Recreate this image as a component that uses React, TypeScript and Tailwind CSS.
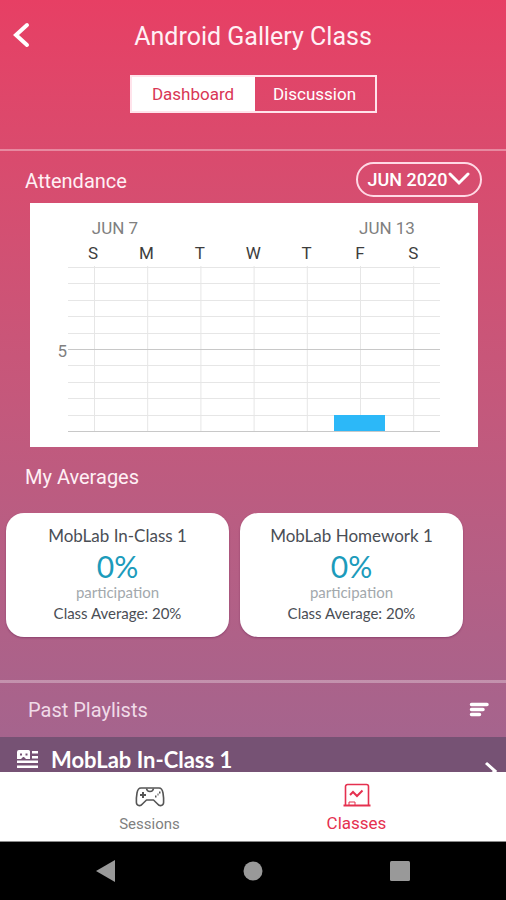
import React from "react";

const days = ["S", "M", "T", "W", "T", "F", "S"];
const lines = Array.from({ length: 11 }, (_, i) => i);

function AttendanceChart() {
  return (
    <svg
      viewBox="0 0 448 244"
      role="img"
      aria-label="Attendance, June 7 to June 13"
      className="block w-full bg-white font-['Roboto',sans-serif]"
    >
      <text x="85" y="31" textAnchor="middle" className="fill-[#808080] text-[17px]">
        JUN 7
      </text>
      <text x="357" y="31" textAnchor="middle" className="fill-[#808080] text-[17px]">
        JUN 13
      </text>
      {days.map((d, i) => (
        <g key={i}>
          <text x={63 + i * 53.4} y="56" textAnchor="middle" className="fill-[#3d3d3d] text-[17px]">
            {d}
          </text>
          <line x1={64.5 + i * 53.2} x2={64.5 + i * 53.2} y1="63" y2="229" stroke="#e6e6e6" />
        </g>
      ))}
      {lines.map((i) => (
        <line
          key={i}
          x1="38"
          x2="410"
          y1={Math.round(64 + i * 16.4) + 0.5}
          y2={Math.round(64 + i * 16.4) + 0.5}
          stroke={i === 5 || i === 10 ? "#c8c8c8" : "#e6e6e6"}
        />
      ))}
      <text x="37" y="154" textAnchor="end" className="fill-[#808080] text-[17px]">
        5
      </text>
      <rect x="304" y="212" width="51" height="16" fill="#2cb8f8" />
    </svg>
  );
}

function AverageCard({ title }: { title: string }) {
  return (
    <article className="flex h-[124px] w-[223px] shrink-0 flex-col items-center rounded-[18px] bg-white pt-3 font-['Lato',sans-serif] text-[#4a4e55] shadow-[0_1px_2px_rgba(90,20,70,0.4)]">
      <h3 className="text-[17px] leading-[22px]">{title}</h3>
      <p className="text-[30px] leading-[38px] text-[#1c9bbb]">0%</p>
      <p className="text-[15px] leading-[14px] text-[#a3a9ad]">participation</p>
      <p className="mt-1 text-[15px] leading-[20px]">Class Average: 20%</p>
    </article>
  );
}

export default function App() {
  return (
    <div className="flex h-screen flex-col overflow-hidden bg-black font-['Roboto',sans-serif]">
      <main className="min-h-0 flex-1 overflow-y-auto bg-linear-to-b from-[#e73f64] to-[#a2658f] text-[#fff0f5] [scrollbar-width:none]">
        <header className="relative flex flex-col items-center border-b-2 border-white/35 pt-[21px] pb-9">
          <button aria-label="Back" className="absolute top-[22px] left-3 text-white">
            <svg width="18" height="26" viewBox="0 0 18 26" fill="none" stroke="currentColor" strokeWidth="4" strokeLinecap="round">
              <path d="M15 3 4 13l11 10" />
            </svg>
          </button>
          <h1 className="text-[25px] leading-8">Android Gallery Class</h1>
          <div className="mt-[22px] flex h-[38px] w-[247px] border-2 border-[#ffe3eb] text-[17px]">
            <button className="flex-1 bg-white pt-0.5 text-[#d93655]">Dashboard</button>
            <button className="w-[120px] pt-0.5 text-white">Discussion</button>
          </div>
        </header>

        <section>
          <div className="flex h-[52px] items-center justify-between pt-1 pr-6 pl-[25px]">
            <h2 className="pt-1 text-[20px]">Attendance</h2>
            <button className="flex h-[35px] w-[126px] items-center justify-center rounded-full border-2 border-[#ffd9e5] text-[18px] font-medium text-white">
              JUN 2020
              <svg width="23" height="16" viewBox="0 0 23 16" fill="none" stroke="currentColor" strokeWidth="3" strokeLinecap="round">
                <path d="M3 3l9 9 9-9" />
              </svg>
            </button>
          </div>
          <div className="pr-7 pl-[30px]">
            <AttendanceChart />
          </div>
        </section>

        <section className="border-b-3 border-white/30 pb-[39px]">
          <h2 className="px-[25px] pt-3.5 text-[20px] leading-8">My Averages</h2>
          <div className="mt-5 flex gap-[11px] overflow-x-auto px-1.5 pb-1 [scrollbar-width:none]">
            <AverageCard title="MobLab In-Class 1" />
            <AverageCard title="MobLab Homework 1" />
          </div>
        </section>

        <section>
          <div className="flex h-[54px] items-center justify-between pr-[17px] pl-7 text-[#f0dbe8]">
            <h2 className="text-[20px]">Past Playlists</h2>
            <button aria-label="Sort playlists" className="text-white">
              <svg width="20" height="16" viewBox="0 0 20 16" stroke="currentColor" strokeWidth="3.5" strokeLinecap="round">
                <path d="M2.500 2.500h15.500M2.500 7.500h11.500M2.500 12.500h8" />
              </svg>
            </button>
          </div>
          <button className="flex h-16 w-full items-start bg-[#765274] pr-2 pl-[17px] text-left text-white">
            <svg width="21" height="19" viewBox="0 0 21 19" fill="currentColor" className="mt-[13px]">
              <path fillRule="evenodd" d="M2 0h9.500a1.500 1.500 0 0 1 1.500 1.500V9H9L7 7h-1L4 9H0V2A2 2 0 0 1 2 0zM3 3.500v2h2v-2zM8.500 3.500v2h2v-2z" />
              <path d="M15 1h6v2.500h-6zM15 6h6v2.500h-6zM0 10.500h21V13H0zM0 15.500h21V18H0z" />
            </svg>
            <span className="ml-[13px] flex-1 font-['Lato',sans-serif] text-[22px] leading-[46px] font-bold">MobLab In-Class 1</span>
            <svg width="16" height="20" viewBox="0 0 16 20" fill="none" stroke="currentColor" strokeWidth="3" className="mt-6">
              <path d="m4 2 9 8-9 8" />
            </svg>
          </button>
        </section>
      </main>

      <nav className="flex h-[70px] shrink-0 border-b border-[#8a8a8a] bg-white px-[46px]">
        <button className="flex flex-1 flex-col items-center pt-[13px] text-[#808080]">
          <svg width="30" height="24" viewBox="0 0 30 24" fill="none" stroke="#555555" strokeWidth="1.600" strokeLinejoin="round">
            <path d="M6 3h18c2.500 0 3.500 2 4 5 .5 3 .8 6.500.6 9.500-.2 3.500-4 4-6 1.500L18.500 15h-7L7.400 19c-2 2.500-5.800 2-6-1.500-.2-3 .1-6.500.6-9.500.5-3 1.500-5 4-5z" />
            <path d="M11.500 3.500c.5 4 6.500 4 7 0" />
            <path d="M8 7v6M5 10h6" strokeWidth="2" />
            <path d="M24 7.500h1.500M20 11.500h1.500M22.500 9.500h1" strokeWidth="2" />
          </svg>
          <span className="text-[15px] leading-[30px]">Sessions</span>
        </button>
        <button className="flex flex-1 flex-col items-center pt-[11px] text-[#e5304f]">
          <svg width="28" height="26" viewBox="0 0 28 26" fill="none" stroke="currentColor" strokeWidth="1.600">
            <path d="M2.500 22.500V3.500a2 2 0 0 1 2-2h19a2 2 0 0 1 2 2v19" />
            <path d="M.5 22.500h27" strokeWidth="2" />
            <path d="M7 12l3-3 4 4 5.500-5.500" strokeWidth="2" />
            <path d="M6 22v-3h6v3" strokeWidth="1" />
          </svg>
          <span className="text-[17px] leading-[28px]">Classes</span>
        </button>
      </nav>

      <footer className="flex h-[58px] shrink-0 items-center justify-between bg-black px-24">
        <button aria-label="System back">
          <svg width="20" height="22" viewBox="0 0 20 22" fill="#999999">
            <path d="M0 11 19 0v22z" />
          </svg>
        </button>
        <button aria-label="Home">
          <svg width="20" height="20" viewBox="0 0 20 20" fill="#999999">
            <circle cx="10" cy="10" r="9.500" />
          </svg>
        </button>
        <button aria-label="Recent apps">
          <svg width="20" height="20" viewBox="0 0 20 20" fill="#999999">
            <rect width="20" height="20" rx="1.500" />
          </svg>
        </button>
      </footer>
    </div>
  );
}
